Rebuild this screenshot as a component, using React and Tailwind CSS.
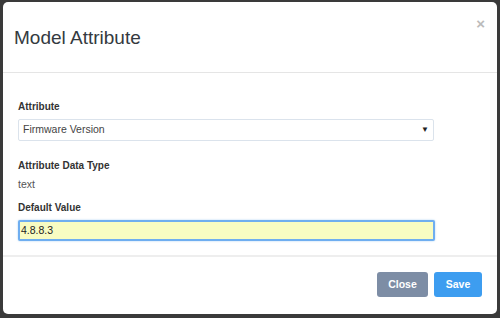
export default function App() {
  return (
    <div
      className="w-[500px] h-[318px] bg-[#3a3a3a] pt-[2px] pl-[3px] pr-[3px] pb-[4px] flex"
      style={{ fontFamily: '"Liberation Sans", Arial, sans-serif' }}
    >
      <div className="flex-1 bg-white rounded-[5px] flex flex-col">
        <div className="relative h-[71px] border-b border-[#e5e5e5] px-[11px] flex items-center">
          <h4 className="text-[19px] text-[#343a40] leading-none">Model Attribute</h4>
          <button className="absolute right-[12px] top-[14px] text-[#bbbbbb] font-bold text-[15px] leading-none">
            ×
          </button>
        </div>

        <div className="px-[15px] pt-[27px] pb-[14px] text-[#333]">
          <div className="text-[10px] font-bold leading-[14px]">Attribute</div>
          <div className="mt-[5px] w-[416px] h-[22px] border border-[#dbe3ec] rounded-[2px] flex items-center justify-between pl-[4px] pr-[4px]">
            <span className="text-[10.5px] text-[#444]">Firmware Version</span>
            <span className="text-[8px] text-[#222] leading-none">▼</span>
          </div>

          <div className="mt-[18px] text-[10px] font-bold leading-[14px]">Attribute Data Type</div>
          <div className="mt-[4px] text-[10.5px] text-[#555] leading-[14px]">text</div>

          <div className="mt-[10px] text-[10px] font-bold leading-[14px]">Default Value</div>
          <div className="mt-[5px] w-[417px] h-[21px] border-2 border-[#6faef0] bg-[#f8fcc2] rounded-[2px] flex items-center pl-[1px] shadow-[0_0_2px_rgba(102,175,233,0.6)]">
            <span className="text-[10.5px] text-[#222]">4.8.8.3</span>
          </div>
        </div>

        <div className="border-t-2 border-[#eeeeee] flex-1 flex justify-end items-start pt-[15px] pr-[15px] gap-[6px]">
          <button className="w-[51px] h-[25px] rounded-[3px] bg-[#7d8da5] text-white text-[10.5px] font-bold">
            Close
          </button>
          <button className="w-[48px] h-[25px] rounded-[3px] bg-[#3d9df0] text-white text-[10.5px] font-bold">
            Save
          </button>
        </div>
      </div>
    </div>
  );
}
